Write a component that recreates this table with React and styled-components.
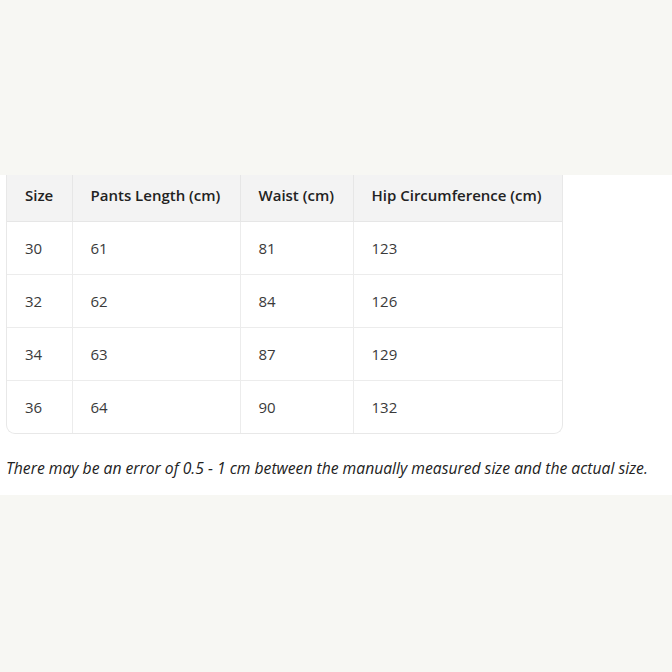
import styled, { createGlobalStyle } from "styled-components";

const GlobalStyle = createGlobalStyle`
  html, body {
    margin: 0;
    padding: 0;
    background: #f7f7f3;
  }
  body {
    font-family: "Open Sans", "Noto Sans", sans-serif;
    color: #333;
  }
`;

const Page = styled.div`
  width: 672px;
  height: 672px;
  padding-top: 175px;
  box-sizing: border-box;
`;

const Section = styled.section`
  background: #fff;
  padding: 0 6px 0;
  height: 320px;
  box-sizing: border-box;
`;

const TableWrap = styled.div`
  width: 557px;
  box-sizing: border-box;
  border: 1px solid #e8e8e8;
  border-top: none;
  border-radius: 0 0 9px 9px;
  overflow: hidden;
`;

const Table = styled.table`
  width: 100%;
  border-collapse: collapse;
  table-layout: fixed;
  font-size: 15px;
`;

const Th = styled.th`
  width: ${(p) => p.$w}px;
  height: 46px;
  padding: 0 0 5px 18px;
  text-align: left;
  font-weight: 600;
  color: #222;
  background: #f3f3f3;
  border-left: ${(p) => (p.$first ? "none" : "1px solid #e6e6e6")};
  border-bottom: 1px solid #e6e6e6;
  box-sizing: border-box;
`;

const Td = styled.td`
  height: 53px;
  padding: 0 0 0 18px;
  color: #3a3a3a;
  border-left: ${(p) => (p.$first ? "none" : "1px solid #ececec")};
  border-top: 1px solid #ececec;
  box-sizing: border-box;
`;

const Note = styled.p`
  margin: 23px 0 0;
  font-size: 15.7px;
  font-style: italic;
  color: #222;
`;

const columns = [
  { label: "Size", w: 65 },
  { label: "Pants Length (cm)", w: 168 },
  { label: "Waist (cm)", w: 113 },
  { label: "Hip Circumference (cm)", w: 209 },
];

const rows = [
  [30, 61, 81, 123],
  [32, 62, 84, 126],
  [34, 63, 87, 129],
  [36, 64, 90, 132],
];

const App = () => {
  return (
    <Page>
      <GlobalStyle />
      <Section>
        <TableWrap>
          <Table>
            <thead>
              <tr>
                {columns.map((c, i) => (
                  <Th key={c.label} $w={c.w} $first={i === 0}>
                    {c.label}
                  </Th>
                ))}
              </tr>
            </thead>
            <tbody>
              {rows.map((r, ri) => (
                <tr key={ri}>
                  {r.map((v, i) => (
                    <Td key={i} $first={i === 0}>
                      {v}
                    </Td>
                  ))}
                </tr>
              ))}
            </tbody>
          </Table>
        </TableWrap>
        <Note>
          There may be an error of 0.5 - 1 cm between the manually measured
          size and the actual size.
        </Note>
      </Section>
    </Page>
  );
};

export default App;
